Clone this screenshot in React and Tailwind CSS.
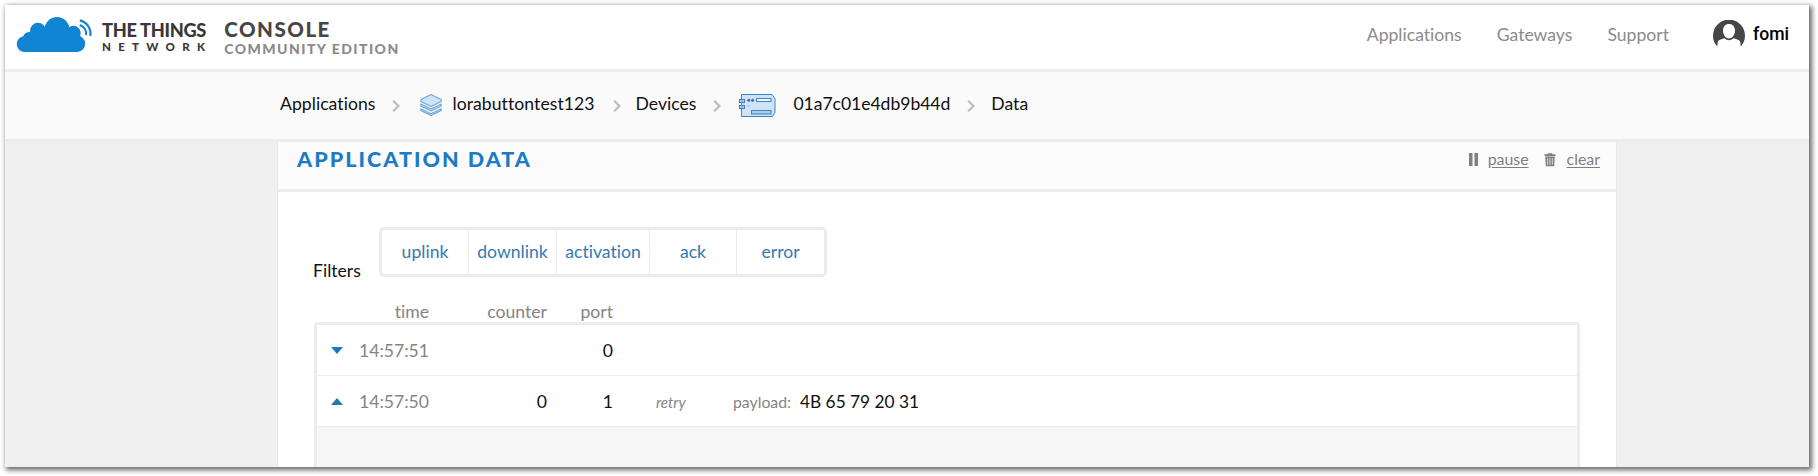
const Cloud = () => (
  <svg width="78" height="38" viewBox="15 16 78 38" className="shrink-0">
    <g fill="#1184d2">
      <circle cx="24.6" cy="44.1" r="7.9" />
      <circle cx="29" cy="38" r="6" />
      <circle cx="38" cy="30.8" r="8" />
      <circle cx="57" cy="29.5" r="12.5" />
      <circle cx="73.5" cy="33" r="7.2" />
      <circle cx="77" cy="43.8" r="8.2" />
      <path d="M24.6 52L24 37l8-6h44l5 8-4 13z" />
    </g>
    <g fill="none" stroke="#1184d2" strokeWidth="2.200">
      <path d="M79.8 20.4C86.6 22 91.4 28.5 90.3 35.8" />
      <path d="M79.8 25C84 26.500 86.600 30.500 86 35" />
    </g>
  </svg>
);

const Avatar = () => (
  <svg width="32" height="27" viewBox="0 0 32 27" className="relative -top-px ml-[44px]">
    <path fill="#464646" fillRule="evenodd" d="M4.300 26.500A16 16 0 1 1 27.700 26.500L27.300 22C26.500 19.800 24 19.300 20.600 18.300Q18.500 20.300 16 20.300T11.400 18.300C8 19.300 5.500 19.800 4.700 22zM16 4C12.400 4 10 6.700 10 10.500S12.400 18.500 16 18.500S22 14.500 22 10.500S19.600 4 16 4z" />
  </svg>
);

const Chevron = ({ className }) => (
  <svg width="8" height="12" viewBox="0 0 8 12" className={`relative top-[2px] shrink-0 ${className}`}>
    <path d="M1.200 0.800L6.400 6L1.200 11.200" fill="none" stroke="#bcbcbc" strokeWidth="2.200" />
  </svg>
);

const Layers = () => (
  <svg width="22" height="22" viewBox="0 0 22 22" className="ml-[20px] relative top-px shrink-0">
    <g fill="#cfe3f6" stroke="#6fa6d6" strokeWidth="1.100" strokeLinejoin="round">
      <path d="M.8 14.800L11 19.800L21.200 14.800V16.400L11 21.400L.8 16.400z" />
      <path d="M.8 10L11 15L21.200 10V12L11 17L.8 12z" />
      <path d="M11 .6L21.200 5.600V7.400L11 12.400L.8 7.400V5.600z" />
    </g>
  </svg>
);

const Board = () => (
  <svg width="37" height="24" viewBox="0 0 37 24" className="ml-[18px] relative top-[2px] shrink-0">
    <g fill="#cfe2f6" stroke="#3f84c2" strokeWidth="1">
      <path d="M2.500 .5H33L36 4.500V18.500L33.500 22.500H2.500z" />
      <rect x=".5" y="5.500" width="5" height="3" fill="#9cc6ec" />
      <rect x=".5" y="11.500" width="5" height="3" fill="#9cc6ec" />
      <rect x="17.500" y="4.500" width="14.500" height="3" fill="#f4f9fe" />
      <rect x="12.500" y="16.500" width="19.500" height="3.500" fill="#a9cdee" />
    </g>
    <g fill="#2f74b5">
      <circle cx="9.800" cy="6.200" r="1.500" />
      <circle cx="13.600" cy="6.200" r="1.500" />
    </g>
    <circle cx="9.800" cy="11.800" r="1" fill="#a6c8ea" />
  </svg>
);

const Trash = () => (
  <svg width="12" height="14" viewBox="0 0 12 14" className="relative top-[2px] ml-[15px]">
    <path fill="#808080" fillRule="evenodd" d="M3.500 1.200L4 .3H8L8.500 1.200H11.500V3H.5V1.200zM1.200 3.400H10.800L10.200 13.200H1.800zM3.400 5V11.800H4.100V5zM5.650 5V11.800H6.350V5zM7.900 5V11.800H8.600V5z" />
  </svg>
);

const filters = [
  ['uplink', 'w-[87px] border-r'],
  ['downlink', 'w-[88px] border-r'],
  ['activation', 'w-[93px] border-r'],
  ['ack', 'w-[87px] border-r'],
  ['error', 'w-[87px]'],
];

const rowGrid = 'grid grid-cols-[14px_84px_118px_66px_43px_77px_67px_1fr] items-center';

const Row = ({ open, time, counter, port, children }) => (
  <div className={`${rowGrid} h-[51px] shrink-0 border-b border-[#ececec] pl-[14px] pt-px leading-6`}>
    <svg width="12" height="7" viewBox="0 0 12 7" className="h-[7px] w-3">
      <path d={open ? 'M0 7L6 0L12 7z' : 'M0 0H12L6 7z'} fill={open ? '#2479b5' : '#1a78c8'} />
    </svg>
    <span className="text-right text-[#858585]">{time}</span>
    <span className="text-right">{counter}</span>
    <span className="text-right">{port}</span>
    {children}
  </div>
);

export default function App() {
  return (
    <div className="h-[476px] w-full overflow-hidden bg-white pt-[5px] pl-[5px] font-['Lato',sans-serif] text-[17.6px] text-[#111] [font-variant-ligatures:none]">
      <div className="flex h-[462px] w-[1804px] flex-col overflow-hidden bg-[#f0f0f0] shadow-[2px_2px_5px_1px_rgba(0,0,0,0.6)]">
        <header className="flex h-[67px] shrink-0 items-start border-b-[3px] border-[#ededed] bg-white pl-[10px] pr-[20px]">
          <div className="pt-[11px]"><Cloud /></div>
          <div className="ml-[9px] pt-[15px] font-black text-[#383838]">
            <div className="text-[18.200px] leading-[20px] tracking-[-0.300px]">THE THINGS</div>
            <div className="text-[11.500px] leading-[13px] font-black tracking-[7.300px]">NETWORK</div>
          </div>
          <div className="ml-[12px] pt-[12px] font-black">
            <div className="text-[20.500px] leading-[25px] tracking-[1.500px] text-[#464646]">CONSOLE</div>
            <div className="text-[14px] leading-[14px] tracking-[1.450px] text-[#8a8a8a]">COMMUNITY EDITION</div>
          </div>
          <nav className="ml-auto flex h-[58px] items-center text-[#8b8b8b]">
            <span className="pt-[2px]">Applications</span>
            <span className="ml-[35px] pt-[2px]">Gateways</span>
            <span className="ml-[35px] pt-[2px]">Support</span>
            <Avatar />
            <span className="ml-[8px] pt-px font-['Roboto',sans-serif] text-[17.600px] font-medium text-black">fomi</span>
          </nav>
        </header>
        <div className="flex h-[70px] shrink-0 items-center border-b-[3px] border-[#ececec] bg-[#fafafa] pb-[4px] pl-[275px] leading-6">
          <span className="tracking-[0.040px]">Applications</span>
          <Chevron className="ml-[17px]" />
          <Layers />
          <span className="ml-[10px] tracking-[0.060px]">lorabuttontest123</span>
          <Chevron className="ml-[18px]" />
          <span className="ml-[15px]">Devices</span>
          <Chevron className="ml-[17px]" />
          <Board />
          <span className="ml-[17px] tracking-[-0.050px]">01a7c01e4db9b44d</span>
          <Chevron className="ml-[17px]" />
          <span className="ml-[16px]">Data</span>
        </div>
        <main className="ml-[272px] flex w-[1340px] grow flex-col border-x border-[#e8e8e8] bg-white">
          <div className="flex h-[50px] shrink-0 items-center border-b-[3px] border-[#ededed] bg-[#fbfbfb] pb-[14px] pl-[19px] pr-[16px]">
            <h1 className="pt-[2px] text-[21.500px] font-black tracking-[2.050px] text-[#1b7cc5]">APPLICATION DATA</h1>
            <div className="ml-auto flex items-center text-[15.900px] text-[#808080]">
              <svg width="9" height="13" viewBox="0 0 9 13" className="relative top-px"><path d="M0 0H3.500V13H0zM5.500 0H9V13H5.500z" fill="#808080" /></svg>
              <span className="ml-[10px] underline underline-offset-2">pause</span>
              <Trash />
              <span className="ml-[11px] underline underline-offset-2">clear</span>
            </div>
          </div>
          <div className="mt-[35px] flex h-[50px] shrink-0 pl-[35px]">
            <span className="w-[66px] pt-[32px] leading-6">Filters</span>
            <div className="flex w-[448px] rounded-[5px] border-[3px] border-[#ececec] text-[#337ab2]">
              {filters.map(([name, cls]) => (
                <span key={name} className={`flex items-center justify-center border-[#ececec] pt-px ${cls}`}>{name}</span>
              ))}
            </div>
          </div>
          <div className={`${rowGrid} mt-[24px] h-[21px] shrink-0 pl-[53px] leading-[21px] text-[#858585]`}>
            <span />
            <span className="text-right">time</span>
            <span className="text-right">counter</span>
            <span className="text-right">port</span>
          </div>
          <div className="ml-[36px] flex w-[1266px] grow flex-col rounded-t-[4px] border-x-[3px] border-t-[3px] border-[#ececec] bg-[#f6f6f6]">
            <div className="flex flex-col bg-white">
              <Row time="14:57:51" port="0" />
              <Row open time="14:57:50" counter="0" port="1">
                <span />
                <span className="text-[15px] italic text-[#858585]">retry</span>
                <span className="pt-px text-[15.800px] text-[#858585]">payload:</span>
                <span className="text-[17.300px]">4B 65 79 20 31</span>
              </Row>
            </div>
          </div>
        </main>
      </div>
    </div>
  );
}
